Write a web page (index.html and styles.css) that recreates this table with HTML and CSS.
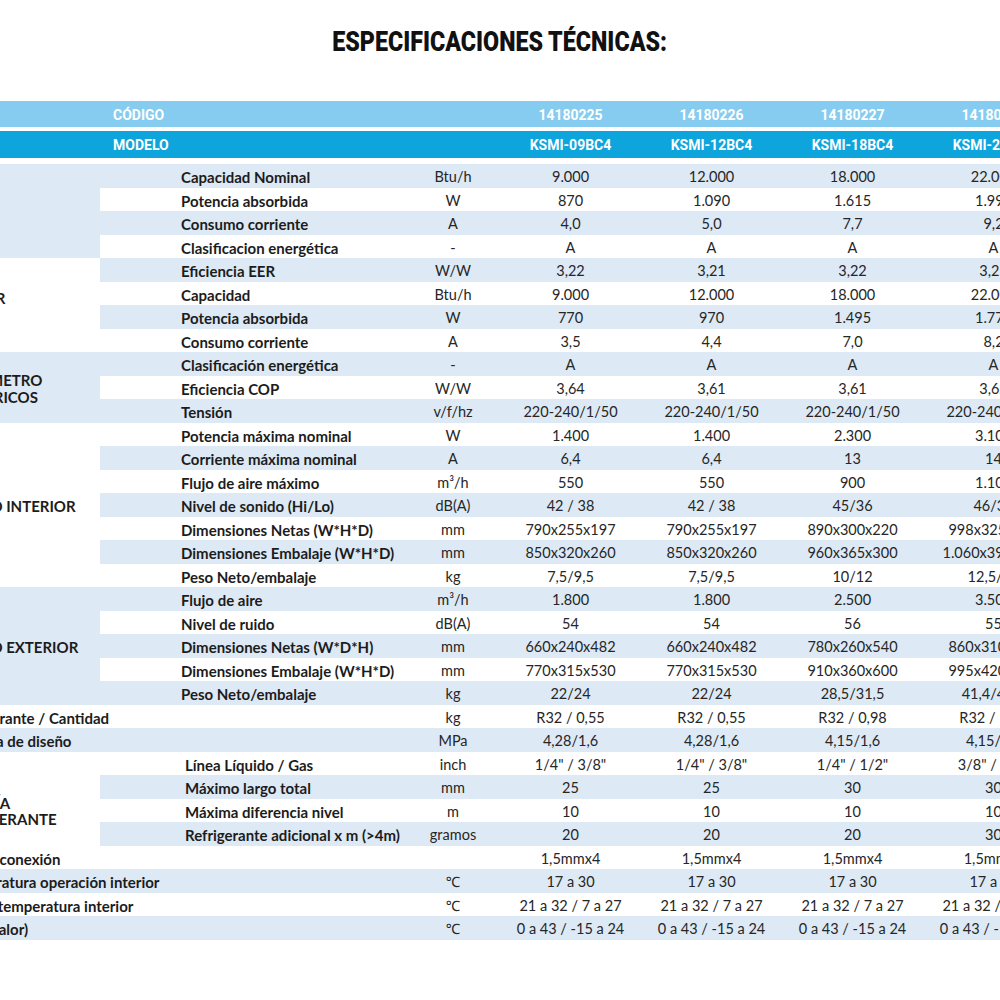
FILE: index.html
```html
<!DOCTYPE html>
<html lang="es">
<head>
<meta charset="utf-8">
<title>Especificaciones técnicas</title>
<link rel="stylesheet" href="styles.css">
</head>
<body>
<main class="page">
  <h1 class="title"><span>ESPECIFICACIONES TÉCNICAS:</span></h1>
  <table class="spec">
    <colgroup>
      <col class="c-group"><col class="c-sub"><col class="c-unit">
      <col class="c-val"><col class="c-val"><col class="c-val"><col class="c-val">
    </colgroup>
    <thead>
      <tr class="h-code"><th></th><th class="h-label" colspan="2">CÓDIGO</th><th>14180225</th><th>14180226</th><th>14180227</th><th>14180228</th></tr>
      <tr class="h-model"><th></th><th class="h-label" colspan="2">MODELO</th><th>KSMI-09BC4</th><th>KSMI-12BC4</th><th>KSMI-18BC4</th><th>KSMI-24BC4</th></tr>
    </thead>
    <tbody>
      <tr class="odd"><td class="grp grp-blue" rowspan="4">FRÍO</td><td class="sub">Capacidad Nominal</td><td>Btu/h</td><td>9.000</td><td>12.000</td><td>18.000</td><td>22.000</td></tr>
      <tr><td class="sub">Potencia absorbida</td><td>W</td><td>870</td><td>1.090</td><td>1.615</td><td>1.990</td></tr>
      <tr class="odd"><td class="sub">Consumo corriente</td><td>A</td><td>4,0</td><td>5,0</td><td>7,7</td><td>9,2</td></tr>
      <tr><td class="sub">Clasificacion energética</td><td>-</td><td>A</td><td>A</td><td>A</td><td>A</td></tr>
      <tr class="odd"><td class="grp grp-white grp-up" rowspan="4">CALOR</td><td class="sub">Eficiencia EER</td><td>W/W</td><td>3,22</td><td>3,21</td><td>3,22</td><td>3,21</td></tr>
      <tr><td class="sub">Capacidad</td><td>Btu/h</td><td>9.000</td><td>12.000</td><td>18.000</td><td>22.000</td></tr>
      <tr class="odd"><td class="sub">Potencia absorbida</td><td>W</td><td>770</td><td>970</td><td>1.495</td><td>1.770</td></tr>
      <tr><td class="sub">Consumo corriente</td><td>A</td><td>3,5</td><td>4,4</td><td>7,0</td><td>8,2</td></tr>
      <tr class="odd"><td class="grp grp-blue grp-param" rowspan="3">PARÁMETRO<br>ELÉCTRICOS</td><td class="sub">Clasificación energética</td><td>-</td><td>A</td><td>A</td><td>A</td><td>A</td></tr>
      <tr><td class="sub">Eficiencia COP</td><td>W/W</td><td>3,64</td><td>3,61</td><td>3,61</td><td>3,62</td></tr>
      <tr class="odd"><td class="sub">Tensión</td><td>v/f/hz</td><td>220-240/1/50</td><td>220-240/1/50</td><td>220-240/1/50</td><td>220-240/1/50</td></tr>
      <tr><td class="grp grp-white" rowspan="7">EQUIPO INTERIOR</td><td class="sub">Potencia máxima nominal</td><td>W</td><td>1.400</td><td>1.400</td><td>2.300</td><td>3.100</td></tr>
      <tr class="odd"><td class="sub">Corriente máxima nominal</td><td>A</td><td>6,4</td><td>6,4</td><td>13</td><td>14</td></tr>
      <tr><td class="sub">Flujo de aire máximo</td><td>m³/h</td><td>550</td><td>550</td><td>900</td><td>1.100</td></tr>
      <tr class="odd"><td class="sub">Nivel de sonido (Hi/Lo)</td><td>dB(A)</td><td>42 / 38</td><td>42 / 38</td><td>45/36</td><td>46/37</td></tr>
      <tr><td class="sub">Dimensiones Netas (W*H*D)</td><td>mm</td><td>790x255x197</td><td>790x255x197</td><td>890x300x220</td><td>998x325x242</td></tr>
      <tr class="odd"><td class="sub">Dimensiones Embalaje (W*H*D)</td><td>mm</td><td>850x320x260</td><td>850x320x260</td><td>960x365x300</td><td>1.060x395x325</td></tr>
      <tr><td class="sub">Peso Neto/embalaje</td><td>kg</td><td>7,5/9,5</td><td>7,5/9,5</td><td>10/12</td><td>12,5/15</td></tr>
      <tr class="odd"><td class="grp grp-blue" rowspan="5">EQUIPO EXTERIOR</td><td class="sub">Flujo de aire</td><td>m³/h</td><td>1.800</td><td>1.800</td><td>2.500</td><td>3.500</td></tr>
      <tr><td class="sub">Nivel de ruido</td><td>dB(A)</td><td>54</td><td>54</td><td>56</td><td>55</td></tr>
      <tr class="odd"><td class="sub">Dimensiones Netas (W*D*H)</td><td>mm</td><td>660x240x482</td><td>660x240x482</td><td>780x260x540</td><td>860x310x640</td></tr>
      <tr><td class="sub">Dimensiones Embalaje (W*H*D)</td><td>mm</td><td>770x315x530</td><td>770x315x530</td><td>910x360x600</td><td>995x420x690</td></tr>
      <tr class="odd"><td class="sub">Peso Neto/embalaje</td><td>kg</td><td>22/24</td><td>22/24</td><td>28,5/31,5</td><td>41,4/45,4</td></tr>
      <tr><td class="lbl" colspan="2">Refrigerante / Cantidad</td><td>kg</td><td>R32 / 0,55</td><td>R32 / 0,55</td><td>R32 / 0,98</td><td>R32 / 1,25</td></tr>
      <tr class="odd"><td class="lbl lbl-press" colspan="2">Presión máxima de diseño</td><td>MPa</td><td>4,28/1,6</td><td>4,28/1,6</td><td>4,15/1,6</td><td>4,15/1,6</td></tr>
      <tr><td class="grp grp-white grp-down" rowspan="4">TUBERÍA<br>REFRIGERANTE</td><td class="sub sub-pipe">Línea Líquido / Gas</td><td>inch</td><td>1/4" / 3/8"</td><td>1/4" / 3/8"</td><td>1/4" / 1/2"</td><td>3/8" / 5/8"</td></tr>
      <tr class="odd"><td class="sub sub-pipe">Máximo largo total</td><td>mm</td><td>25</td><td>25</td><td>30</td><td>30</td></tr>
      <tr><td class="sub sub-pipe">Máxima diferencia nivel</td><td>m</td><td>10</td><td>10</td><td>10</td><td>10</td></tr>
      <tr class="odd"><td class="sub sub-pipe">Refrigerante adicional x m (&gt;4m)</td><td>gramos</td><td>20</td><td>20</td><td>20</td><td>30</td></tr>
      <tr><td class="lbl lbl-conn" colspan="2">Cable de conexión</td><td></td><td>1,5mmx4</td><td>1,5mmx4</td><td>1,5mmx4</td><td>1,5mmx4</td></tr>
      <tr class="odd"><td class="lbl" colspan="2">Temperatura operación interior</td><td>℃</td><td>17 a 30</td><td>17 a 30</td><td>17 a 30</td><td>17 a 30</td></tr>
      <tr><td class="lbl" colspan="2">Rango temperatura interior</td><td>℃</td><td>21 a 32 / 7 a 27</td><td>21 a 32 / 7 a 27</td><td>21 a 32 / 7 a 27</td><td>21 a 32 / 7 a 27</td></tr>
      <tr class="odd"><td class="lbl" colspan="2">(Frío/Calor)</td><td>℃</td><td>0 a 43 / -15 a 24</td><td>0 a 43 / -15 a 24</td><td>0 a 43 / -15 a 24</td><td>0 a 43 / -15 a 24</td></tr>
    </tbody>
  </table>
</main>
</body>
</html>
```
FILE: styles.css
```css
html, body {
  margin: 0;
  padding: 0;
  background: #ffffff;
}

body {
  font-family: Lato, "Noto Sans", "DejaVu Sans", sans-serif;
  color: #222222;
}

.page {
  width: 1000px;
  height: 1000px;
  overflow: hidden;
}

.title {
  margin: 0;
  height: 101px;
  box-sizing: border-box;
  padding-top: 27px;
  text-align: center;
  font-family: Roboto, "DejaVu Sans", sans-serif;
  font-weight: 900;
  font-size: 28px;
  line-height: 30px;
  color: #111111;
}

.title span {
  display: inline-block;
  transform: scaleX(0.83);
}

.spec {
  border-collapse: separate;
  border-spacing: 0;
  table-layout: fixed;
  width: 1120px;
  margin-left: -56px;
}

.c-group { width: 156px; }
.c-sub { width: 306px; }
.c-unit { width: 94px; }
.c-val { width: 141px; }

.spec th {
  padding: 1px 0 0;
  box-sizing: border-box;
  font-family: Roboto, "DejaVu Sans", sans-serif;
  font-weight: 700;
  font-size: 14px;
  color: #ffffff;
  text-align: center;
  vertical-align: middle;
}

.h-code th {
  height: 30px;
  background: #86ccf0;
  border-bottom: 4px solid #ffffff;
}

.h-model th {
  height: 33px;
  background: #0ea5dd;
  border-bottom: 6px solid #ffffff;
}

.spec .h-label {
  text-align: left;
  padding-left: 13px;
}

.spec td {
  height: 23.5px;
  padding: 3px 0 0;
  box-sizing: border-box;
  font-size: 14.5px;
  line-height: 18px;
  text-align: center;
  vertical-align: middle;
  color: #262626;
  white-space: nowrap;
  background: #ffffff;
}

.spec .odd td {
  background: #dde9f5;
}

.spec td.sub {
  text-align: left;
  padding-left: 81px;
  font-size: 15px;
  font-weight: 700;
  color: #1c1c1c;
}

.spec td.sub-pipe {
  padding-left: 85px;
}

.spec td.lbl {
  text-align: left;
  padding-left: 8px;
  font-size: 15px;
  font-weight: 700;
  color: #1c1c1c;
}

.spec td.lbl-press {
  text-indent: -54px;
}

.spec td.lbl-conn {
  text-indent: -14px;
}

.spec td.grp {
  text-align: left;
  padding: 4px 0 0 1px;
  font-size: 15px;
  font-weight: 700;
  line-height: 17px;
  color: #1c1c1c;
}

.spec td.grp-blue {
  background: #dde9f5;
}

.spec td.grp-white {
  background: #ffffff;
}

.spec td.grp-param {
  padding-left: 6px;
}

.spec td.grp-up {
  padding-bottom: 18px;
  text-indent: 11px;
}

.spec td.grp-down {
  padding-top: 25px;
  padding-left: 3px;
  line-height: 16px;
}
```
